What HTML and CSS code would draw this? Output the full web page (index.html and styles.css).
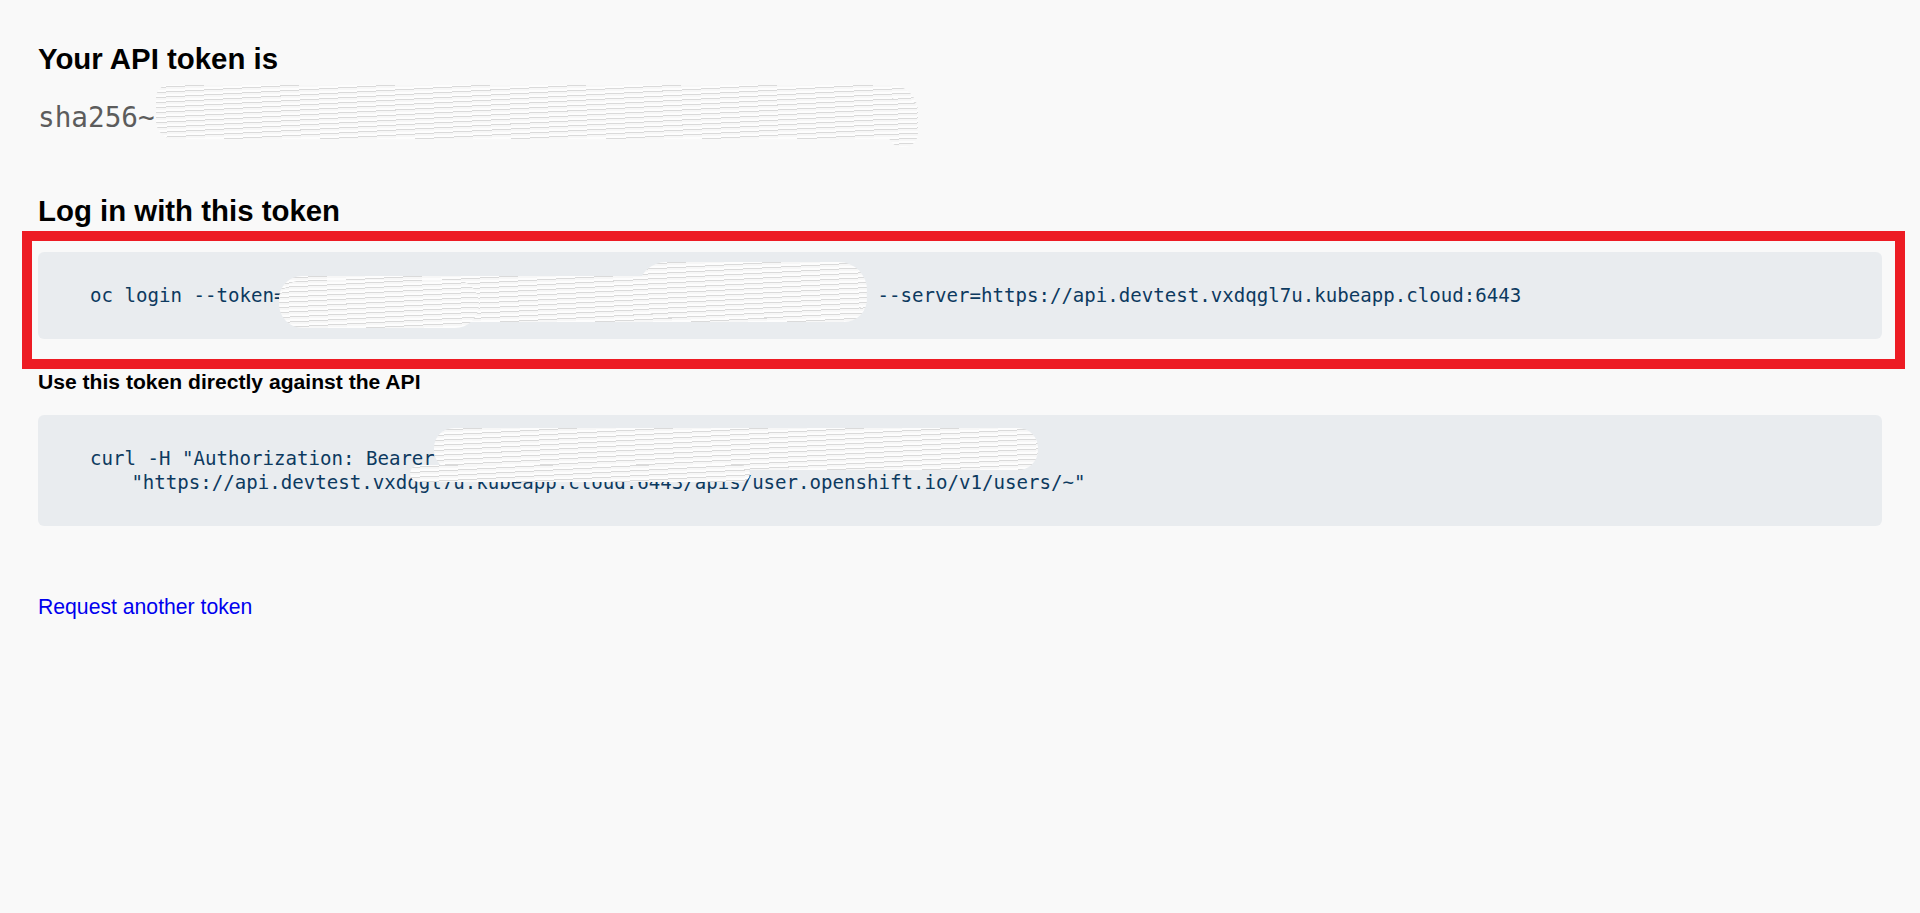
FILE: index.html
```html
<!DOCTYPE html>
<html lang="en">
<head>
  <meta charset="UTF-8" />
  <meta name="viewport" content="width=device-width, initial-scale=1.0"/>
  <title>Display Token</title>
  <link rel="stylesheet" href="styles.css">
</head>
<body>
  <main class="page">
    <h2 class="title">Your API token is</h2>
    <p class="token">sha256~<span class="scribble s-token"></span><span class="scribble s-token-hook"></span></p>

    <h2 class="title title-login">Log in with this token</h2>
    <div class="marked">
      <pre class="cmd">oc login --token=<span class="gap g-login"></span> --server=https://api.devtest.vxdqgl7u.kubeapp.cloud:6443</pre>
      <span class="scribble s-login-a"></span>
      <span class="scribble s-login-b"></span>
      <span class="scribble s-login-c"></span>
      <!-- red annotation frame -->
      <div class="mark"></div>
    </div>

    <h4 class="label">Use this token directly against the API</h4>
    <div class="marked plain">
      <pre class="cmd cmd-curl">curl -H "Authorization: Bearer
   "https://api.devtest.vxdqgl7u.kubeapp.cloud:6443/apis/user.openshift.io/v1/users/~"</pre>
      <span class="scribble s-curl-a"></span>
      <span class="scribble s-curl-b"></span>
    </div>

    <p class="again"><a href="#">Request another token</a></p>
  </main>
</body>
</html>
```

FILE: styles.css
```css
body {
  margin: 0;
  background: #f9f9f9;
  font-family: "Liberation Sans", Arial, sans-serif;
  color: #000;
}

.page {
  padding: 42px 38px 0;
}

.title {
  margin: 0;
  font-size: 29.4px;
  line-height: 33px;
  font-weight: bold;
}

.title-login {
  margin-top: 60px;
}

.token {
  position: relative;
  margin: 26px 0 0;
  font-family: "DejaVu Sans Mono", "Liberation Mono", monospace;
  font-size: 27.7px;
  line-height: 33px;
  color: #5c5c5c;
}

.marked {
  position: relative;
  margin-top: 25px;
}

.marked.plain {
  margin-top: 21px;
}

.cmd {
  margin: 0;
  padding: 31.5px 52px;
  background: #e9ecef;
  border-radius: 6px;
  font-family: "DejaVu Sans Mono", "Liberation Mono", monospace;
  font-size: 19.1px;
  line-height: 24px;
  color: #0d3a5f;
}

/* second line sits a little short of a 4-space indent */
.cmd-curl {
  padding-left: 58.9px;
  text-indent: -6.9px;
}

.gap {
  display: inline-block;
}

.g-login { width: 50.5ch; }

.mark {
  position: absolute;
  left: -16px;
  top: -21px;
  right: -23px;
  bottom: -30px;
  border: 10px solid #ed1c24;
}

.label {
  margin: 31px 0 0;
  font-size: 21.1px;
  line-height: 24px;
  font-weight: bold;
}

.again {
  margin: 69px 0 0;
  font-size: 21.2px;
  line-height: 24px;
}

.again a {
  color: #0000ee;
  text-decoration: none;
}

/* redaction scribbles */
.scribble {
  position: absolute;
  background:
    repeating-linear-gradient(177deg, #fdfdfd 0 2px, #dadada 2px 3px, #f7f7f7 3px 5px);
  border-radius: 24px;
}

.s-token {
  left: 118px;
  top: -16px;
  width: 762px;
  height: 54px;
  border-radius: 14px 30px 30px 20px;
}

.s-token-hook {
  left: 850px;
  top: -4px;
  width: 30px;
  height: 50px;
  border-radius: 10px 16px 14px 14px;
}

.s-login-a {
  left: 241px;
  top: 24px;
  width: 588px;
  height: 46px;
}

.s-login-b {
  left: 600px;
  top: 10px;
  width: 229px;
  height: 56px;
  border-radius: 30px;
}

.s-login-c {
  left: 241px;
  top: 28px;
  width: 200px;
  height: 48px;
}

.s-curl-a {
  left: 396px;
  top: 13px;
  width: 604px;
  height: 42px;
  border-radius: 20px;
}

.s-curl-b {
  left: 372px;
  top: 50px;
  width: 340px;
  height: 17px;
  border-radius: 9px;
}
```
